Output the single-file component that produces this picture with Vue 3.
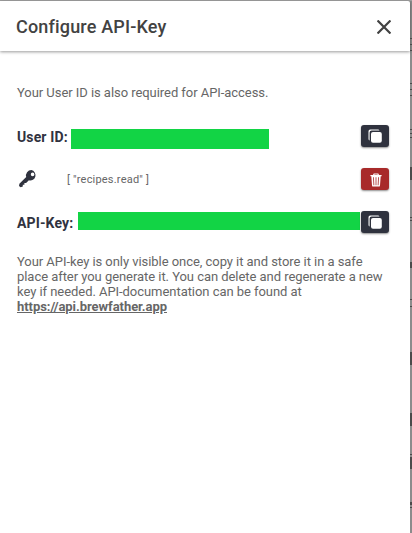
<script setup>
const marks = [
  [38, 1], [44, 1], [50, 1], [83, 1], [89, 1], [95, 1], [129, 1], [133, 1], [137, 1],
  [167, 13], [217, 1], [220, 1], [262, 6], [299, 1], [306, 1], [352, 13], [413, 13],
  [454, 1], [457, 12], [502, 3], [507, 1],
]
</script>

<template>
  <div class="screen">
    <main class="modal">
      <header class="header">
        <h1 class="title">Configure API-Key</h1>
        <svg class="close" viewBox="0 0 14 14"><path d="M1.3 1.3L12.7 12.7M12.7 1.3L1.3 12.7" /></svg>
      </header>
      <section class="content">
        <p class="intro">Your User ID is also required for API-access.</p>
        <div class="row user">
          <b class="label">User ID:</b>
          <span class="redact id"></span>
          <button class="btn">
            <svg width="14" height="14" viewBox="0 0 14 14"><path d="M1.6 11.5A1.7 1.7 0 0 1 .5 10V2.2A1.7 1.7 0 0 1 2.2.5H10A1.7 1.7 0 0 1 11.5 1.6H3.6A2 2 0 0 0 1.6 3.6Z" /><rect x="3" y="3" width="10.8" height="10.8" rx="2" /></svg>
          </button>
        </div>
        <div class="row scope">
          <svg class="key" width="20" height="20" viewBox="0 0 20 20"><path fill-rule="evenodd" d="M13.4 1A5.5 5.5 0 0 0 8.2 8L1.4 14.8 1 17.1 2.6 18.2 4.8 17.5V15.8H6.4V14.1H8.1L10.9 11.3A5.3 5.3 0 1 0 13.4 1ZM14.6 3.6A1.8 1.8 0 1 1 14.6 7.2 1.8 1.8 0 0 1 14.6 3.6Z" /></svg>
          <span class="scopes">[ "recipes.read" ]</span>
          <button class="btn danger">
            <svg width="12" height="14" viewBox="0 0 12 14"><path fill-rule="evenodd" d="M3.2 2V1.3Q3.2.4 4.1.4H7.9Q8.8.4 8.8 1.3V2H11.6V3.2H10.7L10 12.4Q9.9 13.6 8.8 13.6H3.2Q2.1 13.6 2 12.4L1.3 3.2H.4V2ZM4.4 2H7.6V1.4H4.4ZM3.1 4.2L3.5 12.2H4.3L3.9 4.2ZM5.6 4.2V12.2H6.4V4.2ZM8.1 4.2L7.7 12.2H8.5L8.9 4.2Z" /></svg>
          </button>
        </div>
        <div class="row api">
          <b class="label">API-Key:</b>
          <span class="redact secret"></span>
          <button class="btn">
            <svg width="14" height="14" viewBox="0 0 14 14"><path d="M1.6 11.5A1.7 1.7 0 0 1 .5 10V2.2A1.7 1.7 0 0 1 2.2.5H10A1.7 1.7 0 0 1 11.5 1.6H3.6A2 2 0 0 0 1.6 3.6Z" /><rect x="3" y="3" width="10.8" height="10.8" rx="2" /></svg>
          </button>
        </div>
        <p class="note">Your API-key is only visible once, copy it and store it in a safe<br />place after you generate it. You can delete and regenerate a new<br />key if needed. API-documentation can be found at<br /><a>https://api.brewfather.app</a></p>
      </section>
    </main>
    <svg class="behind" width="2" height="533" viewBox="0 0 2 533">
      <rect v-for="m in marks" :key="m[0]" x="0" :y="m[0]" width="2" :height="m[1]" fill="#4b4b4b" />
    </svg>
  </div>
</template>

<style>
body { margin: 0; overflow: hidden; }
</style>
<style scoped>
.screen { width: 412px; height: 533px; box-sizing: border-box; padding-top: 1px; display: flex; position: relative; background: linear-gradient(#a0a0a0 1px, #8c8c8c 1px); font-family: Roboto, sans-serif; overflow: hidden; }
.modal { width: 410px; height: 532px; background: #fff; border-top-right-radius: 2px; }
.behind { position: absolute; right: 0; top: 0; }
.header { height: 50px; box-sizing: border-box; padding: 1px 19px 0 16px; display: flex; align-items: center; justify-content: space-between; box-shadow: 0 1px 3px rgba(0,0,0,.4); }
.title { margin: 0; font-size: 18px; line-height: 24px; font-weight: 500; letter-spacing: .17px; padding-top: 1px; color: #424242; }
.close { width: 14px; height: 14px; fill: none; stroke: #424242; stroke-width: 2.2; stroke-linecap: square; }
.content { padding: 34px 21px 0 17px; color: #666; font-size: 13px; line-height: 15px; letter-spacing: -.05px; }
p { margin: 0; }
.row { display: flex; align-items: center; height: 22px; }
.user { margin-top: 25px; }
.scope { margin-top: 21px; }
.api { margin-top: 21px; }
.label { color: #303240; font-size: 14px; font-weight: 700; letter-spacing: .13px; white-space: nowrap; flex: none; padding-top: 2px; }
.user .label { width: 54px; }
.api .label { width: 61px; }
.redact { background: #12d445; flex: none; }
.id { width: 198px; height: 20px; margin-top: 6px; }
.secret { width: 282px; height: 18px; margin-bottom: 2px; }
.btn { width: 28px; height: 22px; flex: none; margin-left: auto; padding: 0; border: 0; border-radius: 3px; background: #2f323e; box-shadow: 0 1px 2px rgba(0,0,0,.45); display: flex; align-items: center; justify-content: center; }
.btn svg { fill: #fff; }
.danger { background: #a82a2a; }
.danger svg { margin: 1px 0 0 1px; }
.key { fill: #2f323e; margin-left: 1px; }
.scopes { margin-left: 29px; font-size: 11px; letter-spacing: .2px; }
.note { margin-top: 21px; white-space: nowrap; }
.note a { font-weight: 700; text-decoration: underline; }
</style>
